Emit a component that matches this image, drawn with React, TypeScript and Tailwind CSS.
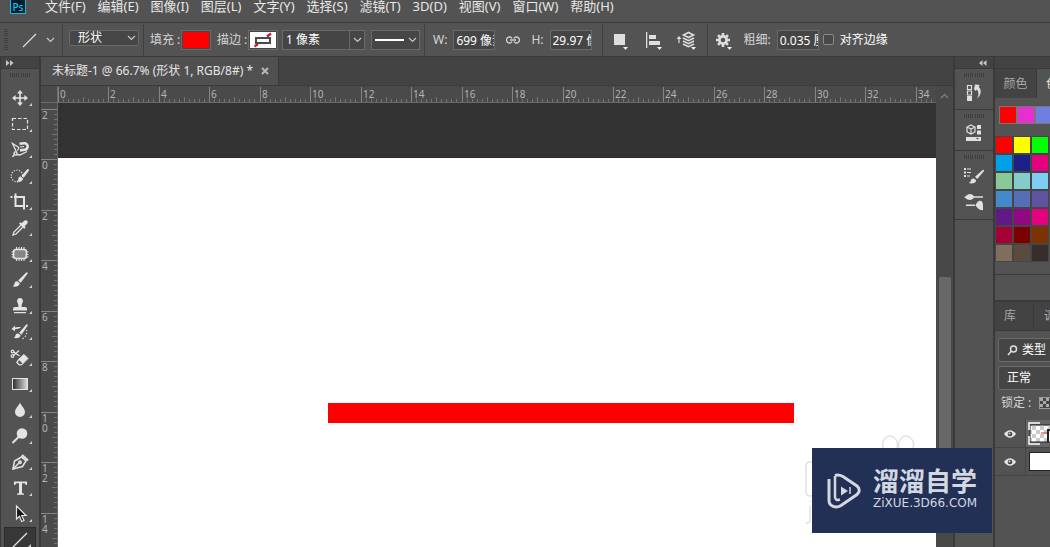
import React, { useState } from "react";

const MENUS = [
  "文件(F)",
  "编辑(E)",
  "图像(I)",
  "图层(L)",
  "文字(Y)",
  "选择(S)",
  "滤镜(T)",
  "3D(D)",
  "视图(V)",
  "窗口(W)",
  "帮助(H)",
];

const RECENT = ["#ff0000", "#e62fd0", "#6f7fe0"];

const SWATCHES = [
  "#ff0000", "#ffff00", "#00ff00",
  "#00a0e9", "#1d2088", "#e4007f",
  "#89c997", "#84ccc9", "#7ecef4",
  "#448aca", "#556fb5", "#5f52a0",
  "#601986", "#920783", "#e4007f",
  "#a40035", "#7d0000", "#7d3200",
  "#806d5a", "#5a4a3f", "#362e2b",
];

// one ruler unit pair (2 cm) in px
const STEP = 50.45;

const TOOLS: { name: string; icon: React.ReactNode }[] = [
  {
    name: "移动工具",
    icon: (
      <g fill="#e4e4e4">
        <path d="M9.200 4h1.600v12H9.200zM4 9.200h12v1.600H4z" />
        <path d="M10 2l3 3.600H7zM10 18l3-3.600H7zM2 10l3.600-3v6zM18 10l-3.600-3v6z" />
      </g>
    ),
  },
  {
    name: "矩形选框工具",
    icon: <rect x="2.500" y="4.500" width="15" height="11" fill="none" stroke="#e4e4e4" strokeDasharray="3.500 2" strokeWidth="1.200" />,
  },
  {
    name: "磁性套索工具",
    icon: (
      <g fill="none" stroke="#e4e4e4" strokeWidth="1.300">
        <path d="M9 7.500L2.500 3.500 6.500 12M6.500 14.500l3.500.500 7-3.500M5 13.500L2.500 17M9 7.500l-1.500 3" />
        <circle cx="5.500" cy="13.500" r="1.600" />
        <path d="M9.500 3.800L14 3.200a3.300 3.300 0 0 1 .700 6.600L10 10.400" strokeWidth="2.600" />
        <path d="M10 7l4-.500" strokeWidth="1.200" />
      </g>
    ),
  },
  {
    name: "快速选择工具",
    icon: (
      <g fill="#e4e4e4">
        <circle cx="7" cy="10" r="5.800" fill="none" stroke="#e4e4e4" strokeWidth="1.200" strokeDasharray="1.200 1.400" />
        <path d="M19 3.500l-1.500-.5-6 6.800 2.200 2L19 4.500zM10.700 10.600c-2 0-2.300 1.500-2.500 3-.1 1-1 1.600-1.700 1.900 3 .9 6.300.1 6.500-2.900z" />
      </g>
    ),
  },
  {
    name: "裁剪工具",
    icon: (
      <g fill="none" stroke="#e4e4e4" strokeWidth="2">
        <path d="M.500 5H2.500M4 5H14v9.500" />
        <path d="M5.500 1.500V14H14.500" />
        <path d="M14 14v3.500M16 14h2" />
      </g>
    ),
  },
  {
    name: "吸管工具",
    icon: (
      <g>
        <path d="M11 7L4 14l-1 3 3-1 7-7" fill="none" stroke="#e4e4e4" strokeWidth="1.300" />
        <path d="M9 5.500l1.500-1.300 1.300 1c1.500-2.300 3.700-4 5.300-2.500s0 3.700-2.500 5.400l1 1.300-1.300 1.300z" fill="#e4e4e4" />
      </g>
    ),
  },
  {
    name: "修补工具",
    icon: (
      <g stroke="#e4e4e4">
        <rect x="3.500" y="5.500" width="13" height="9" rx="2.500" fill="#858585" strokeWidth="1.500" />
        <path d="M6.500 3v3M9 3v3M11.500 3v3M14 3v3M6.500 14v3M9 14v3M11.500 14v3M14 14v3M1.500 8h3M1.500 10.500h3M1.500 13h3M15.500 8h3M15.500 10.500h3M15.500 13h3" strokeWidth="1.100" />
      </g>
    ),
  },
  {
    name: "画笔工具",
    icon: (
      <path fill="#e4e4e4" d="M17.500 2.500l-1-.3-8.300 8.300 2.500 2.300 7-9.300zM7.300 11.300c-2.200-.2-2.800 1.500-3 3-.2 1-1 1.700-2 2 3.300 1.200 7.300.2 7.400-3z" />
    ),
  },
  {
    name: "仿制图章工具",
    icon: (
      <path fill="#e4e4e4" d="M10 2a3 3 0 0 1 2.700 4.300C12 7.700 11.500 8.500 11.600 11H15c1.300 0 2 .8 2 2v1.500H3V13c0-1.200.8-2 2-2h3.400c.1-2.500-.4-3.300-1.100-4.700A3 3 0 0 1 10 2zM4 16h12v1.300H4z" />
    ),
  },
  {
    name: "历史记录画笔工具",
    icon: (
      <g>
        <path fill="#e4e4e4" d="M17.500 2.500l-1-.2-7.300 8.500 2.300 2 6.200-9.300zM8.300 11.500c-2.200-.2-2.800 1.300-3 2.500-.2 1-1 1.500-2 1.800 3 1 7.300.2 7.300-2.500zM1.500 7l3.500-3.500v2c2-.4 4-.5 6-.500-1 1.500-3 2-6 2.200v2z" />
        <path d="M16.500 8c.8 3-.5 7-4.500 9" fill="none" stroke="#e4e4e4" strokeWidth="1.200" strokeDasharray="1.200 1.800" />
      </g>
    ),
  },
  {
    name: "橡皮擦工具",
    icon: (
      <g>
        <path d="M9 11l5-4.500 4 4-6.500 6.500H9L6.500 14.500z" fill="#e4e4e4" stroke="#e4e4e4" />
        <path d="M9.300 12.300l3 3-1.200 1H9.500l-1.700-2z" fill="#535353" />
        <g fill="none" stroke="#e4e4e4" strokeWidth="1.200">
          <path d="M3.500 3.800l6 4.200M3.500 7.500L9 2.500" />
          <circle cx="2.500" cy="3.500" r="1.300" />
          <circle cx="2.500" cy="8" r="1.300" />
        </g>
      </g>
    ),
  },
  {
    name: "渐变工具",
    icon: (
      <g>
        <defs>
          <linearGradient id="grad">
            <stop offset="0" stopColor="#2c2c2c" />
            <stop offset="1" stopColor="#dedede" />
          </linearGradient>
        </defs>
        <rect x="2.500" y="4.500" width="15" height="11" fill="url(#grad)" stroke="#e4e4e4" />
      </g>
    ),
  },
  { name: "模糊工具", icon: <path d="M10 2.500c1 3 5 6 5 9.500a5 5 0 0 1-10 0c0-3.500 4-6.500 5-9.500z" fill="#e4e4e4" /> },
  {
    name: "减淡工具",
    icon: (
      <g>
        <circle cx="12" cy="7.500" r="5.300" fill="#e4e4e4" />
        <path d="M9 10.500L2.500 17" stroke="#e4e4e4" strokeWidth="2" />
      </g>
    ),
  },
  {
    name: "钢笔工具",
    icon: (
      <g fill="none" stroke="#e4e4e4" strokeWidth="1.500">
        <path d="M3 17l1.500-8 7-4 4.500 4-3.500 5.500z" />
        <path d="M3 17l6-6" />
        <circle cx="10" cy="10.200" r="1.200" />
        <path d="M12 3l6 5.500" strokeWidth="2.200" />
      </g>
    ),
  },
  { name: "文字工具", icon: <path d="M4 3.500h13V7h-1.300c-.3-1.300-.8-1.700-2-1.700H12v9.200c0 .7.500 1 2 1v1.200H7v-1.200c1.500 0 2-.3 2-1V5.300H7.300c-1.200 0-1.700.4-2 1.700H4z" fill="#e4e4e4" /> },
  { name: "路径选择工具", icon: <path d="M6.500 2v13l3-2.800 2.200 5.300 2.300-1-2.300-5H16z" fill="#151515" stroke="#e4e4e4" strokeWidth="1.200" /> },
  { name: "直线工具", icon: <path d="M3 17L17 3" stroke="#e4e4e4" strokeWidth="1.300" /> },
];

function Chevron() {
  return (
    <svg width="9" height="6" viewBox="0 0 9 6" fill="none" stroke="#c8c8c8" strokeWidth="1.200">
      <path d="M1 1l3.500 3.500L8 1" />
    </svg>
  );
}

function Corner() {
  return (
    <svg className="absolute right-0 bottom-0" width="5" height="3" viewBox="0 0 5 3">
      <path d="M0 0h5L2.500 3z" fill="#f0f0f0" />
    </svg>
  );
}

function Divider() {
  return <span className="h-8 w-px shrink-0 bg-[#404040]" />;
}

function Grip() {
  return (
    <div className="flex h-1 w-5 justify-between">
      {Array.from({ length: 10 }, (_, i) => (
        <span key={i} className="h-1 w-px bg-[#3e3e3e]" />
      ))}
    </div>
  );
}

function OptionField({ label, value }: { label: string; value: string }) {
  const [text, setText] = useState(value);
  return (
    <label className="flex shrink-0 items-center gap-[6px]">
      <span className="whitespace-nowrap text-[#d6d6d6]">{label}</span>
      <input
        value={text}
        onChange={(e) => setText(e.target.value)}
        className="h-5 w-[42px] border border-[#686868] bg-[#454545] pl-[2px] text-white outline-none"
      />
    </label>
  );
}

function MenuBar() {
  return (
    <header className="flex h-[23px] shrink-0 items-start border-b border-[#3a3a3a] bg-[#535353] pl-[10px]">
      <div className="-mt-1 flex h-[18px] w-4 items-center justify-center border border-[#18b5e8] bg-[#001e2b] pt-1 text-[10px] leading-3 font-medium text-[#26c0f0]">
        Ps
      </div>
      <nav className="ml-[19px] flex gap-3 text-[13px] leading-3 text-[#e8e8e8]">
        {MENUS.map((m) => (
          <button key={m} className="whitespace-nowrap">
            {m}
          </button>
        ))}
      </nav>
    </header>
  );
}

function OptionsBar() {
  const [mode, setMode] = useState("形状");
  const [width, setWidth] = useState("1 像素");
  return (
    <div className="flex h-[34px] shrink-0 items-center overflow-hidden border-b border-[#3a3a3a] bg-[#535353] text-xs">
      <span className="ml-1 flex h-[22px] w-1 shrink-0 flex-col justify-between">
        {Array.from({ length: 10 }, (_, i) => (
          <span key={i} className="h-px w-1 bg-[#404040]" />
        ))}
      </span>
      <button aria-label="直线工具" className="mr-[7px] ml-3 flex shrink-0 items-center gap-2">
        <svg width="18" height="18" viewBox="0 0 18 18">
          <path d="M3 16L16 3" stroke="#dcdcdc" strokeWidth="1.200" />
        </svg>
        <Chevron />
      </button>
      <Divider />

      <div className="relative -mt-1 mr-1 ml-[6px] shrink-0">
        <select
          aria-label="工具模式"
          value={mode}
          onChange={(e) => setMode(e.target.value)}
          className="block h-4 w-[70px] appearance-none rounded-xs border border-[#6a6a6a] bg-[#464646] pl-2 text-xs leading-[14px] text-white outline-none"
        >
          <option>形状</option>
          <option>路径</option>
          <option>像素</option>
        </select>
        <span className="pointer-events-none absolute top-[5px] right-[3px]">
          <Chevron />
        </span>
      </div>
      <Divider />

      <label className="ml-[6px] flex shrink-0 items-center gap-px text-[#d6d6d6]">
        <span className="w-[30px] whitespace-nowrap">填充 :</span>
        <button aria-label="填充" className="h-5 w-[30px] border border-[#6a6a6a] bg-[#464646] p-px">
          <span className="block h-full bg-[#ff0000]" />
        </button>
      </label>
      <label className="ml-[6px] flex shrink-0 items-center gap-px text-[#d6d6d6]">
        <span className="w-[30px] whitespace-nowrap">描边 :</span>
        <button aria-label="描边" className="h-5 w-[30px] border border-[#6a6a6a] bg-[#464646] p-px">
          <svg className="block h-full w-full" viewBox="0 0 26 16">
            <rect width="26" height="16" fill="#fff" />
            <path d="M4.500 14.500L8 12M17 4.500L21 1.500" stroke="#d3142c" strokeWidth="2.200" />
            <rect x="6" y="6" width="14" height="5" fill="#fff" stroke="#4a4a4a" strokeWidth="2" />
          </svg>
        </button>
      </label>
      <div className="ml-1 flex h-5 w-[83px] shrink-0 border border-[#6a6a6a] bg-[#454545]">
        <input
          aria-label="描边宽度"
          value={width}
          onChange={(e) => setWidth(e.target.value)}
          className="w-0 flex-1 pl-[3px] text-white outline-none"
        />
        <button aria-label="宽度选项" className="flex w-[15px] items-center justify-center border-l border-[#6a6a6a]">
          <Chevron />
        </button>
      </div>
      <button aria-label="描边类型" className="mr-1 ml-[6px] flex h-5 w-[49px] shrink-0 items-center gap-1 border border-[#6a6a6a] bg-[#464646] pl-[3px]">
        <span className="h-[2px] w-[29px] bg-white" />
        <Chevron />
      </button>
      <Divider />

      <div className="ml-2 flex shrink-0 items-center gap-[10px]">
        <OptionField label="W:" value="699 像素" />
        <button aria-label="链接宽高">
          <svg width="16" height="10" viewBox="0 0 16 10" fill="none" stroke="#cfcfcf" strokeWidth="1.400">
            <path d="M7 3.300A3 3 0 1 0 7 6.700M9 3.300A3 3 0 1 1 9 6.700M5 5h6" />
          </svg>
        </button>
        <OptionField label="H:" value="29.97 像素" />
        <Divider />
      </div>

      <button aria-label="路径操作" className="relative ml-[11px] h-5 w-[14px] shrink-0">
        <svg width="14" height="16" viewBox="0 0 14 16">
          <path d="M0 2h11v11H0z" fill="#dedede" />
        </svg>
        <Corner />
      </button>
      <button aria-label="路径对齐方式" className="relative ml-[18px] h-5 w-4 shrink-0">
        <svg width="15" height="16" viewBox="0 0 15 16" fill="#dedede">
          <path d="M0 0h1.300v16H0zM3 3h7v4H3zM3 9h11v4H3z" />
        </svg>
        <Corner />
      </button>
      <button aria-label="路径排列方式" className="relative mr-[11px] ml-[14px] h-5 w-5 shrink-0">
        <svg width="20" height="18" viewBox="0 0 20 18" fill="none" stroke="#dedede" strokeWidth="1.600">
          <path d="M12.500 1.500l5 2.500-5 2.500-5-2.500z" />
          <path d="M7 7l5.500 2.700L18 7M7 10l5.500 2.700L18 10M7 13l5.500 2.700L18 13" />
          <path d="M3 12V7" strokeWidth="1.200" />
          <path d="M.5 8L3 5l2.500 3z" fill="#dedede" stroke="none" />
        </svg>
        <Corner />
      </button>
      <Divider />
      <button aria-label="其他形状和路径选项" className="relative ml-2 h-5 w-4 shrink-0">
        <svg className="mt-px" width="14" height="14" viewBox="0 0 14 14">
          <g fill="#dedede">
            <path d="M5.700 0h2.600v14H5.700zM0 5.700h14v2.600H0z" />
            <path d="M5.700 0h2.600v14H5.700zM0 5.700h14v2.600H0z" transform="rotate(45 7 7)" />
            <circle cx="7" cy="7" r="5" />
          </g>
          <circle cx="7" cy="7" r="2.300" fill="#535353" />
        </svg>
        <Corner />
      </button>
      <div className="ml-3 flex shrink-0">
        <OptionField label="粗细:" value="0.035 厘米" />
      </div>
      <label className="ml-1 flex shrink-0 items-center gap-[6px] text-white">
        <input type="checkbox" className="size-[11px] appearance-none rounded-xs border border-[#8a8a8a] bg-[#484848]" />
        <span className="whitespace-nowrap">对齐边缘</span>
      </label>
    </div>
  );
}

function ToolBox() {
  const [active, setActive] = useState("直线工具");
  return (
    <aside className="flex w-[41px] shrink-0 flex-col border-r-2 border-l border-[#3a3a3a] bg-[#535353]">
      <button aria-label="展开工具栏" className="flex h-3 shrink-0 items-center border-b border-[#3a3a3a] bg-[#434343] pl-[5px]">
        <svg width="8" height="6" viewBox="0 0 8 6" fill="#c8c8c8">
          <path d="M0 0l3.500 3L0 6zM4 0l3.500 3L4 6z" />
        </svg>
      </button>
      <div className="flex h-4 shrink-0 justify-center pt-1">
        <Grip />
      </div>
      {TOOLS.map((t) => (
        <button
          key={t.name}
          aria-label={t.name}
          onClick={() => setActive(t.name)}
          className={`relative mx-[3px] flex h-[26px] shrink-0 items-center justify-center ${
            active === t.name ? "border border-[#2c2c2c] bg-[#383838]" : ""
          }`}
        >
          <svg width="20" height="20" viewBox="0 0 20 20">
            {t.icon}
          </svg>
          <svg className="absolute right-1 bottom-[5px]" width="3" height="3" viewBox="0 0 3 3">
            <path d="M3 0v3H0z" fill="#d0d0d0" />
          </svg>
        </button>
      ))}
    </aside>
  );
}

function HorizontalRuler() {
  // side panels take about 170px of the window
  const count = Math.ceil((window.innerWidth - 170) / STEP);
  const majors = Array.from({ length: count }, (_, i) => i);
  return (
    <svg className="block h-full w-full" fontFamily="'Noto Sans', sans-serif" fontSize="10" fill="#b4b4b4">
      {majors.map((i) => (
        <g key={i} transform={`translate(${Math.round(i * STEP)} 0)`}>
          <path d="M.5 1v16" stroke="#858585" />
          {Array.from({ length: 9 }, (_, j) => (
            <path key={j} d={`M${Math.round((j + 1) * 5.04) + 0.5} ${j === 4 ? 11 : 13}v5`} stroke="#737373" />
          ))}
          <text x="2" y="12">
            {i * 2}
          </text>
        </g>
      ))}
      <path d="M0 16.500h4000" stroke="#6a6a6a" />
    </svg>
  );
}

function VerticalRuler() {
  const count = Math.ceil((window.innerHeight - 103) / STEP);
  const majors = Array.from({ length: count }, (_, i) => i);
  return (
    <svg className="block h-full w-full" fontFamily="'Noto Sans', sans-serif" fontSize="10" fill="#b4b4b4">
      {majors.map((i) => (
        <g key={i} transform={`translate(0 ${Math.round(i * STEP) + 6})`}>
          <path d="M0 .5h17" stroke="#858585" />
          {Array.from({ length: 9 }, (_, j) => (
            <path key={j} d={`M${j === 4 ? 11 : 13} ${Math.round((j + 1) * 5.04) + 0.5}h5`} stroke="#737373" />
          ))}
          {String(Math.abs(i - 1) * 2)
            .split("")
            .map((c, k) => (
              <text key={k} x="1" y={10 + k * 10}>
                {c}
              </text>
            ))}
        </g>
      ))}
      <path d="M16.500 0v4000" stroke="#6a6a6a" />
    </svg>
  );
}

function Document() {
  return (
    <main className="flex min-w-0 flex-1 flex-col bg-[#434343]">
      <div className="flex h-[29px] shrink-0 border-b border-[#3a3a3a]">
        <div className="flex items-center gap-2 border-r border-[#383838] bg-[#505050] pr-[9px] pl-[11px] text-xs text-[#e6e6e6]">
          <span className="whitespace-nowrap">未标题-1 @ 66.7% (形状 1, RGB/8#) *</span>
          <button aria-label="关闭">
            <svg width="8" height="8" viewBox="0 0 8 8" stroke="#b8b8b8" strokeWidth="2">
              <path d="M1 1l6 6M7 1L1 7" />
            </svg>
          </button>
        </div>
      </div>
      <div className="flex min-h-0 flex-1">
        <div className="flex min-w-0 flex-1 flex-col">
          <div className="flex h-[17px] shrink-0 bg-[#4a4a4a]">
            <div className="w-[17px] shrink-0 border-r border-b border-[#6a6a6a]" />
            <div className="min-w-0 flex-1 overflow-hidden">
              <HorizontalRuler />
            </div>
          </div>
          <div className="flex min-h-0 flex-1">
            <div className="w-[17px] shrink-0 overflow-hidden bg-[#4a4a4a]">
              <VerticalRuler />
            </div>
            <div className="relative min-w-0 flex-1 overflow-hidden bg-[#323232] pt-[54px]">
              <div className="h-full border-t border-[#3a2228] bg-white" />
              <div className="absolute top-[300px] left-[270px] h-5 w-[466px] bg-[#ff0000]" />
              <svg className="absolute right-0 bottom-0" width="136" height="120" viewBox="0 0 136 120" fill="none" stroke="#e2dfe1" strokeWidth="1.500">
                <ellipse cx="90" cy="18" rx="7.500" ry="9" />
                <ellipse cx="106" cy="18" rx="7.500" ry="9" />
                <path d="M14 35h-4q-4 0-4 4v26q0 4 4 4h4" />
                <path d="M10 74v1M10 79v14q0 3-4 3" />
              </svg>
            </div>
          </div>
        </div>
        <div className="flex w-[17px] shrink-0 flex-col items-center bg-[#484848] pt-[7px]">
          <svg width="9" height="6" viewBox="0 0 9 6" fill="none" stroke="#7c7c7c" strokeWidth="1.400">
            <path d="M1 5l3.500-3.500L8 5" />
          </svg>
          <div className="mt-[178px] h-56 w-3 shrink-0 rounded-xs bg-[#676767]" />
        </div>
      </div>
    </main>
  );
}

function IconDock() {
  return (
    <aside className="flex w-[42px] shrink-0 flex-col border-x-2 border-[#3a3a3a] bg-[#535353]">
      <button aria-label="展开面板" className="flex h-3 shrink-0 items-center justify-end border-b border-[#3a3a3a] bg-[#434343] pr-[6px]">
        <svg width="8" height="6" viewBox="0 0 8 6" fill="#c8c8c8">
          <path d="M3.500 0L0 3l3.500 3zM7.500 0L4 3l3.500 3z" />
        </svg>
      </button>
      <div className="flex h-[41px] shrink-0 flex-col items-center gap-[6px] border-b border-[#3a3a3a] pt-1">
        <Grip />
        <button aria-label="历史记录">
          <svg width="18" height="20" viewBox="0 0 18 20">
            <path d="M2.500 2.500h4v4h-4zM2.500 8h4v4h-4z" fill="none" stroke="#e0e0e0" strokeWidth="1.200" />
            <path d="M2 13h5v5H2z" fill="#e0e0e0" />
            <path d="M9 6l1-4.500 5 .5-1.500 1.500c3.300 3.500 3 8.500-1.500 12 2-3.500 2-6.500 0-9l-1.500 1.500z" fill="#e0e0e0" />
          </svg>
        </button>
      </div>
      <div className="flex h-[41px] shrink-0 flex-col items-center gap-[6px] border-b border-[#3a3a3a] pt-1">
        <Grip />
        <button aria-label="属性">
          <svg width="18" height="18" viewBox="0 0 18 18" fill="none" stroke="#e0e0e0">
            <path d="M6 1l4 2v5l-4 2-4-2V3zM2 3l4 2 4-2M6 5v5" strokeWidth="1.200" />
            <path d="M12 1h4v4h-4zM12 6.500h4v4h-4zM1 13h15v4H1z" fill="#e0e0e0" stroke="none" />
            <path d="M11 14l1.500 1.500L14 14z" fill="#444" stroke="none" />
          </svg>
        </button>
      </div>
      <div className="flex h-[69px] shrink-0 flex-col items-center gap-[7px] border-b border-[#3a3a3a] pt-1">
        <Grip />
        <button aria-label="画笔">
          <svg width="22" height="20" viewBox="0 0 22 20" fill="#e0e0e0">
            <path d="M1 2h2v2H1zM1 5.500h2v2H1zM1 9h2v2H1zM4 2.500h4v1H4zM4 6h4v1H4zM4 9.500h3v1H4z" />
            <path d="M21 4l-1-.3-8 7 2.300 2.300 6.700-8zM11 12.500c-2.300-.4-3 1-3.300 2.500-.2 1-1 1.600-2 1.900 3.300 1.200 7.300.2 7.400-2.700z" />
          </svg>
        </button>
        <button aria-label="画笔设置">
          <svg width="20" height="18" viewBox="0 0 20 18" fill="#e0e0e0">
            <path d="M0 4c2 0 3-3 6-3 2 0 3 1.500 4 2.200h9v1.600h-9C9 5.500 8 7 6 7 3 7 2 5.500 0 4zM2 11.500h9v1.600H2zM11.500 12.300c1-2.500 3-4.500 4.500-4.500 2 0 3 1.500 3 4.500v5c-3 0-6-2-7.500-5z" />
          </svg>
        </button>
      </div>
    </aside>
  );
}

function Eye() {
  return (
    <svg width="12" height="8" viewBox="0 0 12 8">
      <path d="M0 4q6-7.500 12 0-6 7.500-12 0z" fill="#e4e4e4" />
      <circle cx="6" cy="4" r="2.300" fill="#3e3e3e" />
      <circle cx="5.500" cy="3.400" r="1" fill="#e4e4e4" />
    </svg>
  );
}

function Panels() {
  const [blend, setBlend] = useState("正常");
  return (
    <aside className="flex w-[55px] shrink-0 flex-col overflow-hidden bg-[#535353] text-xs">
      <div className="h-3 shrink-0 border-b border-[#3a3a3a] bg-[#434343]" />
      <div className="flex h-[29px] shrink-0 bg-[#434343] text-[#a8a8a8]">
        <button className="w-[42px] shrink-0 border-r border-[#3a3a3a]">颜色</button>
        <button className="shrink-0 bg-[#535353] pl-[9px] whitespace-nowrap text-[#e8e0d4]">色板</button>
      </div>
      <div className="flex h-[38px] shrink-0 overflow-hidden pt-2 pl-1">
        {RECENT.map((c) => (
          <button key={c} aria-label={c} className="h-[18px] w-[18px] shrink-0 border border-[#777777]" style={{ backgroundColor: c }} />
        ))}
      </div>
      <div className="flex h-[139px] shrink-0 flex-wrap content-start border-b border-[#3a3a3a]">
        {SWATCHES.map((c, i) => (
          <button key={i} aria-label={c} className="h-[18px] w-[18px] border border-[#454545]" style={{ backgroundColor: c }} />
        ))}
      </div>
      <div className="h-[27px] shrink-0 border-b-2 border-[#3a3a3a]" />
      <div className="flex h-[29px] shrink-0 border-b border-[#3a3a3a] bg-[#434343] text-[#a8a8a8]">
        <button className="w-[39px] shrink-0 border-r border-[#3a3a3a] pr-2">库</button>
        <button className="shrink-0 pl-[10px] whitespace-nowrap">调整</button>
      </div>
      <div className="flex shrink-0 flex-col pt-[7px] pl-[3px] text-white">
        <button className="flex h-6 w-24 items-center gap-1 rounded-xs border border-[#6a6a6a] bg-[#454545] pl-2">
          <svg width="11" height="11" viewBox="0 0 11 11" fill="none" stroke="#e0e0e0" strokeWidth="1.500">
            <circle cx="6.500" cy="4" r="3" />
            <path d="M4.500 6L1 10" />
          </svg>
          类型
        </button>
        <select
          aria-label="混合模式"
          value={blend}
          onChange={(e) => setBlend(e.target.value)}
          className="mt-1 h-6 w-24 appearance-none rounded-xs border border-[#6a6a6a] bg-[#454545] pl-2 outline-none"
        >
          <option>正常</option>
          <option>溶解</option>
        </select>
      </div>
      <div className="mb-1 flex h-[26px] shrink-0 items-center gap-2 pl-[6px] text-[#d6d6d6]">
        <span className="w-[30px] shrink-0 whitespace-nowrap">锁定 :</span>
        <button aria-label="锁定透明像素" className="shrink-0">
          <svg width="12" height="12" viewBox="0 0 12 12">
            <rect x=".5" y=".5" width="11" height="11" fill="#444" stroke="#999" />
            <path d="M1 1h3v3H1zM7 1h3v3H7zM4 4h3v3H4zM1 7h3v3H1zM7 7h3v3H7z" fill="#aaa" />
          </svg>
        </button>
      </div>
      <div className="flex h-7 shrink-0 border-b border-[#444444]">
        <button aria-label="显示形状 1" className="flex w-[31px] shrink-0 items-center justify-center border-r border-[#444444]">
          <Eye />
        </button>
        <div className="shrink-0 bg-[#666666] py-[2px] pl-[2px]">
          <svg width="40" height="24" viewBox="0 0 40 24">
            <defs>
              <pattern id="check" width="8" height="8" patternUnits="userSpaceOnUse">
                <rect width="8" height="8" fill="#fff" />
                <path d="M0 0h4v4H0zM4 4h4v4H4z" fill="#ccc" />
              </pattern>
            </defs>
            <rect x="2" y="3" width="38" height="17" fill="url(#check)" stroke="#222" />
            <path d="M13 11h10" stroke="#e03030" />
            <path d="M1 8V1h11M1 14v8h11" fill="none" stroke="#fff" strokeWidth="1.500" />
            <path d="M20 20V8h20" fill="#fff" stroke="#222" strokeWidth="2" />
          </svg>
        </div>
      </div>
      <div className="flex h-7 shrink-0 border-b border-[#444444]">
        <button aria-label="显示背景" className="flex w-[31px] shrink-0 items-center justify-center border-r border-[#444444]">
          <Eye />
        </button>
        <div className="flex shrink-0 items-center pl-[3px]">
          <span className="h-[19px] w-10 border border-[#222222] bg-white" />
        </div>
      </div>
    </aside>
  );
}

function Badge() {
  return (
    <div className="absolute right-[58px] bottom-[14px] flex h-[85px] w-[180px] items-center bg-[#223056] pl-[15px] text-[#d3d7e0]">
      <svg width="34" height="36" viewBox="0 0 34 36" fill="none" stroke="#d3d7e0" strokeWidth="3">
        <path d="M8 2.500c3-1 5-.5 8 1l14 9.500c3 2.500 3 6 0 8.500L14 32.500c-5 3-12 1-12-5V6" />
        <path d="M8 3v21c0 3 2 3.500 5 2.500" strokeWidth="2.500" />
        <path d="M14 13.500l7 4.500-7 4.500z" fill="#d3d7e0" stroke="none" />
        <path d="M23 14v7" strokeWidth="1.500" />
      </svg>
      <div className="ml-3 flex flex-col pb-1">
        <span className="text-[26px] leading-7 font-bold whitespace-nowrap">溜溜自学</span>
        <span className="font-['DejaVu_Sans',sans-serif] text-xs leading-4 whitespace-nowrap">ZiXUE.3D66.COM</span>
      </div>
    </div>
  );
}

export default function App() {
  return (
    <div className="relative flex h-screen w-full flex-col overflow-hidden bg-[#535353] font-['Noto_Sans','Noto_Sans_CJK_SC',sans-serif]">
      <MenuBar />
      <OptionsBar />
      <div className="flex min-h-0 flex-1">
        <ToolBox />
        <Document />
        <IconDock />
        <Panels />
      </div>
      <Badge />
    </div>
  );
}
